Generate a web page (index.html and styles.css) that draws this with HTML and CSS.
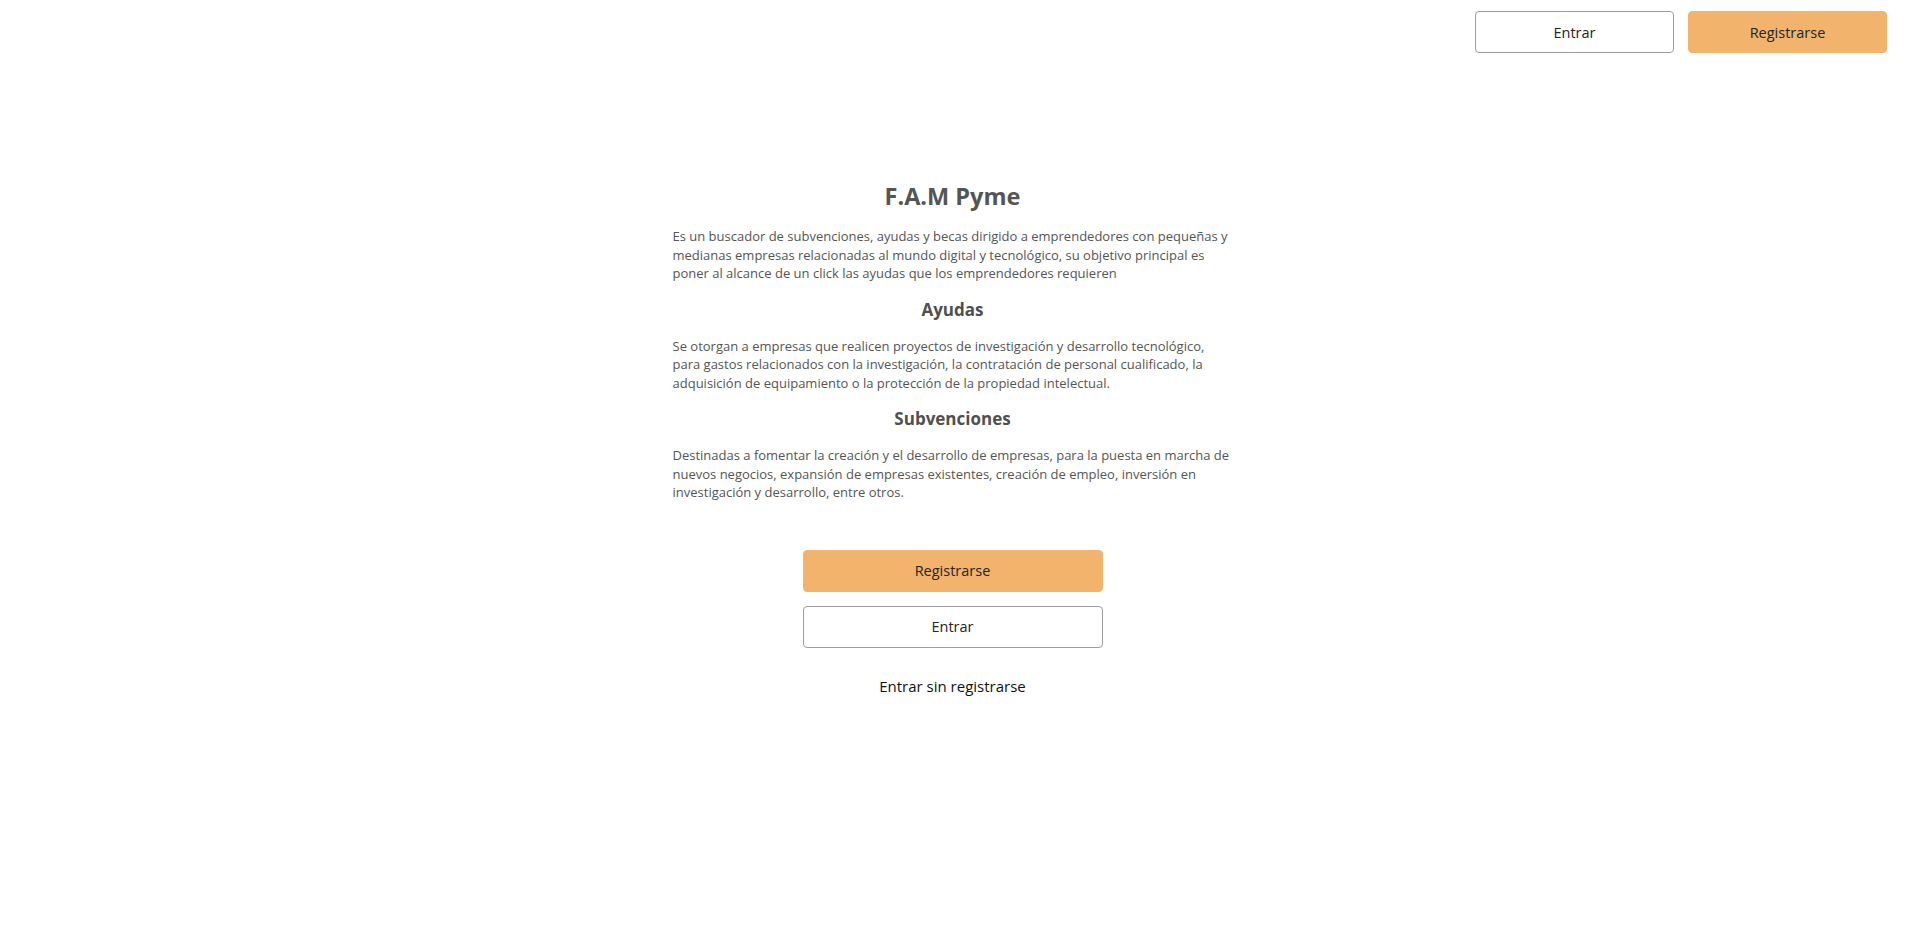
FILE: index.html
```html
<!DOCTYPE html>
<html lang="es">
<head>
<meta charset="utf-8">
<title>F.A.M Pyme</title>
<link rel="stylesheet" href="styles.css">
</head>
<body>
<header class="topbar">
  <nav class="auth-nav">
    <button class="btn btn-outline btn-top">Entrar</button>
    <button class="btn btn-primary btn-top">Registrarse</button>
  </nav>
</header>
<main class="intro">
  <h1 class="intro-title">F.A.M Pyme</h1>
  <p class="intro-text">Es un buscador de subvenciones, ayudas y becas dirigido a emprendedores con pequeñas y medianas empresas relacionadas al mundo digital y tecnológico, su objetivo principal es poner al alcance de un click las ayudas que los emprendedores requieren</p>
  <h2 class="intro-subtitle">Ayudas</h2>
  <p class="intro-text">Se otorgan a empresas que realicen proyectos de investigación y desarrollo tecnológico, para gastos relacionados con la investigación, la contratación de personal cualificado, la adquisición de equipamiento o la protección de la propiedad intelectual.</p>
  <h2 class="intro-subtitle">Subvenciones</h2>
  <p class="intro-text">Destinadas a fomentar la creación y el desarrollo de empresas, para la puesta en marcha de nuevos negocios, expansión de empresas existentes, creación de empleo, inversión en investigación y desarrollo, entre otros.</p>
  <div class="actions">
    <button class="btn btn-primary btn-wide">Registrarse</button>
    <button class="btn btn-outline btn-wide">Entrar</button>
    <a class="guest-link" href="#">Entrar sin registrarse</a>
  </div>
</main>
</body>
</html>
```
FILE: styles.css
```css
html, body {
  margin: 0;
  padding: 0;
  background: #ffffff;
}

body {
  font-family: "Open Sans", "Noto Sans", sans-serif;
  color: #555555;
}

.topbar {
  display: flex;
  justify-content: flex-end;
  padding: 11px 18px 0 0;
}

.auth-nav {
  display: flex;
  gap: 14px;
}

.btn {
  box-sizing: border-box;
  display: flex;
  align-items: center;
  justify-content: center;
  font-family: "Open Sans", "Noto Sans", sans-serif;
  font-size: 14.5px;
  color: #212529;
  border-radius: 4px;
  cursor: pointer;
  padding: 0;
}

.btn-top {
  width: 199px;
  height: 42px;
}

.btn-outline {
  background: #ffffff;
  border: 1px solid #9e9e9e;
}

.btn-primary {
  background: #f2b46c;
  border: 1px solid #f2b46c;
}

.intro {
  width: 560px;
  margin: 0 auto;
  padding-top: 128px;
  display: flex;
  flex-direction: column;
}

.intro-title {
  margin: 0 0 16px;
  font-size: 23.5px;
  line-height: 30px;
  font-weight: 700;
  text-align: center;
  color: #555555;
}

.intro-subtitle {
  margin: 0 0 16px;
  font-size: 17px;
  line-height: 22px;
  font-weight: 700;
  text-align: center;
  color: #4f4f4f;
}

.intro-text {
  margin: 0 0 16px;
  font-size: 13px;
  line-height: 18.5px;
  color: #555555;
}

.actions {
  display: flex;
  flex-direction: column;
  align-items: center;
  gap: 14px;
  margin-top: 32px;
}

.btn-wide {
  width: 300px;
  height: 42px;
}

.guest-link {
  margin-top: 14px;
  font-size: 15px;
  line-height: 20px;
  color: #111111;
  text-decoration: none;
}
```
